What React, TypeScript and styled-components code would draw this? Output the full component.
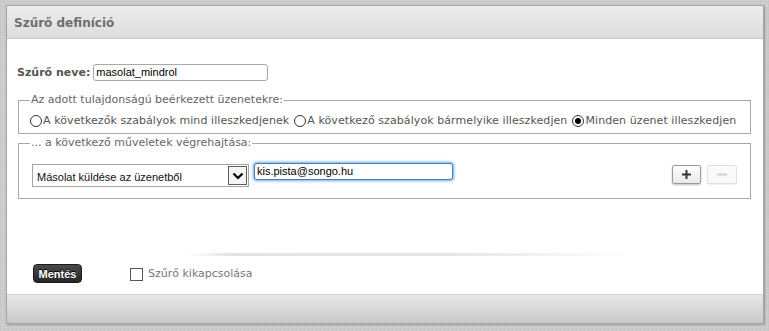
import React from 'react';
import styled, { createGlobalStyle } from 'styled-components';

const GlobalStyle = createGlobalStyle`
  html, body {
    margin: 0;
    padding: 0;
  }
  body {
    background-color: #cbcbcb;
    background-image:
      repeating-linear-gradient(0deg, rgba(255, 255, 255, 0.08) 0 1px, transparent 1px 3px),
      repeating-linear-gradient(90deg, rgba(0, 0, 0, 0.03) 0 1px, transparent 1px 4px);
    font-family: 'DejaVu Sans', Verdana, sans-serif;
  }
`;

const UI_FONT = `'DejaVu Sans', Verdana, sans-serif`;
const INPUT_FONT = `'Liberation Sans', Arial, sans-serif`;

/* 페이지 */
const Page = styled.div`
  padding: 5px 5px 8px 6px;
  height: 331px;
  box-sizing: border-box;
`;

const Panel = styled.div`
  width: 758px;
  box-sizing: border-box;
  border: 1px solid #a4a4a4;
  box-shadow: 1px 1px 2px rgba(0, 0, 0, 0.25);
  background: #fff;
  display: flex;
  flex-direction: column;
`;

const Header = styled.div`
  height: 33px;
  border-bottom: 1px solid #c6c6c6;
  background: linear-gradient(#ededed, #dddddd);
  display: flex;
  align-items: center;
  padding-left: 7px;
  padding-top: 2px;
  box-sizing: border-box;
`;

const Title = styled.h1`
  margin: 0;
  font-family: ${UI_FONT};
  font-size: 12px;
  font-weight: bold;
  color: #6e6e6e;
`;

const Body = styled.div`
  height: 255px;
  box-sizing: border-box;
  padding: 24px 12px 0 10px;
  display: flex;
  flex-direction: column;
`;

/* 이름 */
const NameRow = styled.div`
  display: flex;
  align-items: center;
  gap: 3px;
  height: 18px;
  margin-bottom: 12px;
`;

const NameLabel = styled.label`
  font-family: ${UI_FONT};
  font-size: 11px;
  font-weight: bold;
  color: #555;
`;

const TextInput = styled.div<{ $width: number; $focus?: boolean }>`
  width: ${(p) => p.$width}px;
  height: 17px;
  box-sizing: border-box;
  border: 1px solid ${(p) => (p.$focus ? '#3d7fc4' : '#a9a9a9')};
  border-radius: 3px;
  box-shadow: ${(p) => (p.$focus ? '0 0 3px 1px rgba(70, 140, 210, 0.75)' : 'none')};
  font-family: ${INPUT_FONT};
  font-size: 11px;
  color: #000;
  line-height: 15px;
  padding-left: 2px;
  background: #fff;
`;

/* 필드셋 */
const Group = styled.fieldset<{ $padTop: number; $padBottom: number; $gapAfter?: number }>`
  margin: 0 0 ${(p) => p.$gapAfter ?? 0}px 1px;
  border: 1px solid #a8a8a8;
  padding: ${(p) => p.$padTop}px 12px ${(p) => p.$padBottom}px 11px;
  min-width: 0;
`;

const Legend = styled.legend`
  font-family: ${UI_FONT};
  font-size: 11px;
  line-height: 14px;
  color: #666;
  padding: 0 1px;
`;

const RadioRow = styled.div`
  display: flex;
  align-items: center;
  gap: 5px;
  white-space: nowrap;
`;

const RadioItem = styled.label`
  display: flex;
  align-items: center;
  font-family: ${UI_FONT};
  font-size: 11px;
  line-height: 14px;
  letter-spacing: 0.08px;
  color: #555;
`;

const RadioCircle = styled.span<{ $checked?: boolean }>`
  width: 12px;
  height: 12px;
  margin-right: 1px;
  box-sizing: border-box;
  border: 1px solid #333;
  border-radius: 50%;
  display: inline-flex;
  align-items: center;
  justify-content: center;
  &::after {
    content: '';
    display: ${(p) => (p.$checked ? 'block' : 'none')};
    width: 6px;
    height: 6px;
    border-radius: 50%;
    background: #000;
  }
`;

const ActionRow = styled.div`
  display: flex;
  align-items: flex-start;
  gap: 5px;
  padding-left: 2px;
`;

const Select = styled.div`
  width: 217px;
  height: 23px;
  margin-top: 1px;
  box-sizing: border-box;
  border: 1px solid #a5a5a5;
  background: #fff;
  display: flex;
  align-items: center;
  padding: 0 1px 0 4px;
`;

const SelectText = styled.span`
  flex: 1;
  font-family: ${INPUT_FONT};
  font-size: 11px;
  color: #111;
  padding-top: 2px;
`;

const SelectArrow = styled.span`
  width: 19px;
  height: 19px;
  box-sizing: border-box;
  border: 1px solid #5e5e5e;
  background: #f4f4f4;
  display: flex;
  align-items: center;
  justify-content: center;
`;

const Spacer = styled.div`
  flex: 1;
`;

const IconButton = styled.button<{ $disabled?: boolean }>`
  width: ${(p) => (p.$disabled ? 30 : 29)}px;
  height: 19px;
  margin-top: 2px;
  padding: 0;
  box-sizing: border-box;
  border: 1px solid ${(p) => (p.$disabled ? '#e0e0e0' : '#9a9a9a')};
  border-radius: 2px;
  background: ${(p) => (p.$disabled ? '#fafafa' : 'linear-gradient(#ffffff, #e9e9e9)')};
  box-shadow: ${(p) => (p.$disabled ? '0 1px 1px rgba(0,0,0,0.06)' : '0 1px 2px rgba(0,0,0,0.25)')};
  display: flex;
  align-items: center;
  justify-content: center;
`;

const ButtonGroup = styled.div`
  display: flex;
  gap: 6px;
  margin-right: 1px;
`;

/* 구분선 */
const Divider = styled.div`
  margin: 54px 0 0 170px;
  width: 450px;
  height: 3px;
  background: linear-gradient(90deg, rgba(225, 225, 225, 0), #e3e3e3 10%, #e6e6e6 60%, rgba(240, 240, 240, 0));
`;

const FooterRow = styled.div`
  display: flex;
  align-items: center;
  margin-top: 8px;
  padding-left: 16px;
  gap: 48px;
`;

const SaveButton = styled.button`
  width: 49px;
  height: 19px;
  padding: 0;
  border: 1px solid #1a1a1a;
  border-radius: 4px;
  background: linear-gradient(#4a4a4a, #262626);
  color: #fff;
  font-family: ${INPUT_FONT};
  font-size: 11px;
  font-weight: bold;
  text-shadow: 0 -1px 0 #000;
`;

const CheckItem = styled.label`
  display: flex;
  align-items: center;
  gap: 5px;
  font-family: ${UI_FONT};
  font-size: 11px;
  color: #777;
`;

const CheckBox = styled.span`
  width: 13px;
  height: 13px;
  box-sizing: border-box;
  border: 1px solid #555;
  background: #fff;
  margin-top: 2px;
`;

const Footer = styled.div`
  height: 28px;
  border-top: 1px solid #d4d4d4;
  background: linear-gradient(#e7e7e7, #c9c9c9);
`;

const Chevron = () => (
  <svg width="12" height="8" viewBox="0 0 12 8">
    <path d="M1.5 1.5 L6 6 L10.5 1.5" fill="none" stroke="#000" strokeWidth="2.2" />
  </svg>
);

const Plus = ({ color }: { color: string }) => (
  <svg width="9" height="9" viewBox="0 0 9 9">
    <rect x="0" y="3.5" width="9" height="2" fill={color} />
    <rect x="3.5" y="0" width="2" height="9" fill={color} />
  </svg>
);

const Minus = ({ color }: { color: string }) => (
  <svg width="10" height="9" viewBox="0 0 10 9">
    <rect x="0" y="3.5" width="10" height="2" fill={color} />
  </svg>
);

const App = () => (
  <Page>
    <GlobalStyle />
    <Panel>
      <Header>
        <Title>Szűrő definíció</Title>
      </Header>
      <Body>
        <NameRow>
          <NameLabel>Szűrő neve:</NameLabel>
          <TextInput $width={175}>masolat_mindrol</TextInput>
        </NameRow>

        <Group $padTop={7} $padBottom={5} $gapAfter={2}>
          <Legend>Az adott tulajdonságú beérkezett üzenetekre:</Legend>
          <RadioRow>
            <RadioItem>
              <RadioCircle />
              A következők szabályok mind illeszkedjenek
            </RadioItem>
            <RadioItem>
              <RadioCircle />
              A következő szabályok bármelyike illeszkedjen
            </RadioItem>
            <RadioItem>
              <RadioCircle $checked />
              Minden üzenet illeszkedjen
            </RadioItem>
          </RadioRow>
        </Group>

        <Group $padTop={13} $padBottom={11}>
          <Legend>... a következő műveletek végrehajtása:</Legend>
          <ActionRow>
            <Select>
              <SelectText>Másolat küldése az üzenetből</SelectText>
              <SelectArrow>
                <Chevron />
              </SelectArrow>
            </Select>
            <TextInput $width={199} $focus>
              kis.pista@songo.hu
            </TextInput>
            <Spacer />
            <ButtonGroup>
              <IconButton>
                <Plus color="#333" />
              </IconButton>
              <IconButton $disabled>
                <Minus color="#cfcfcf" />
              </IconButton>
            </ButtonGroup>
          </ActionRow>
        </Group>

        <Divider />

        <FooterRow>
          <SaveButton>Mentés</SaveButton>
          <CheckItem>
            <CheckBox />
            Szűrő kikapcsolása
          </CheckItem>
        </FooterRow>
      </Body>
      <Footer />
    </Panel>
  </Page>
);

export default App;
